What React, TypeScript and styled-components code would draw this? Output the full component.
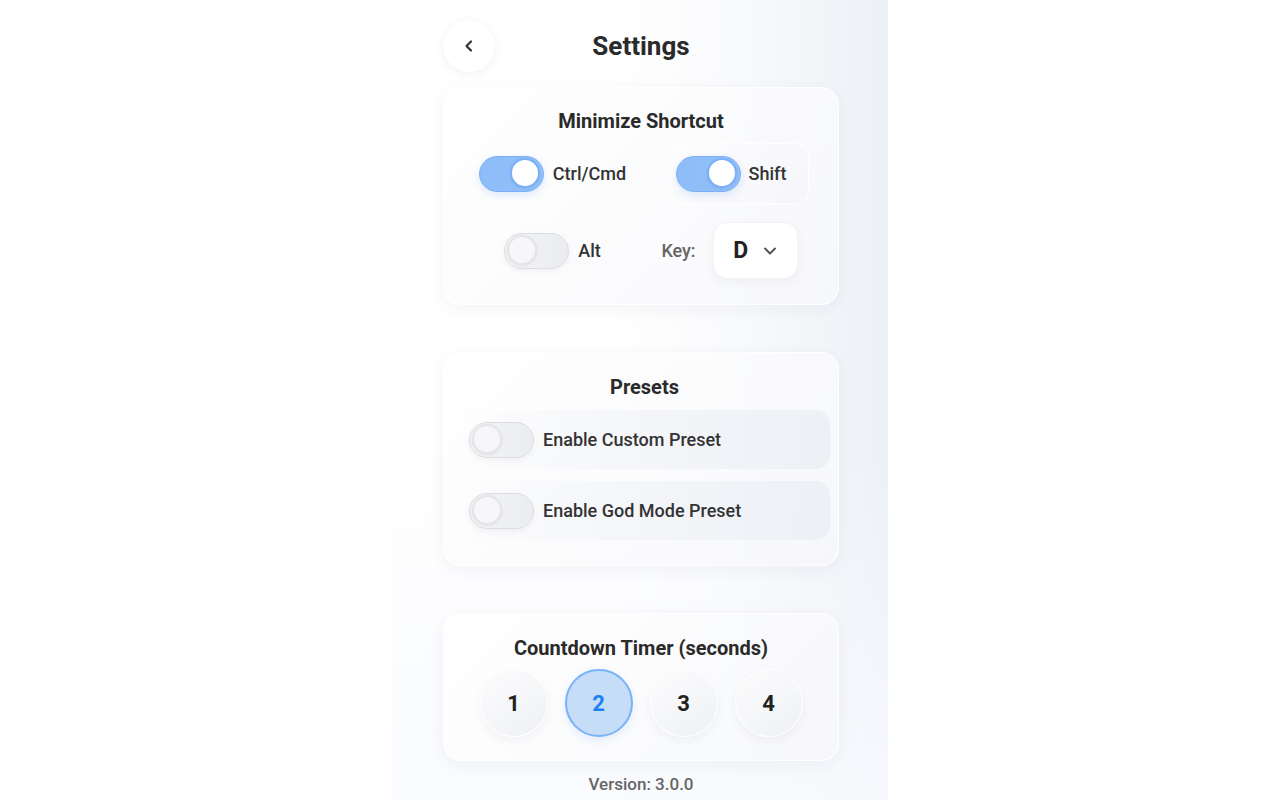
import React, { useState } from "react";
import styled, { createGlobalStyle } from "styled-components";

const GlobalStyle = createGlobalStyle`
  html, body {
    margin: 0;
    padding: 0;
    background: #ffffff;
    font-family: Roboto, "Liberation Sans", sans-serif;
    color: #2a2a2a;
  }
  * {
    box-sizing: border-box;
  }
`;

const Page = styled.div`
  display: flex;
  justify-content: center;
  width: 1280px;
  height: 800px;
  overflow: hidden;
`;

const Panel = styled.main`
  width: 496px;
  height: 800px;
  padding: 20px 49px 0 51px;
  background:
    linear-gradient(180deg, rgba(255, 255, 255, 0) 55%, rgba(248, 250, 254, 0.85) 100%),
    linear-gradient(90deg, #ffffff 0%, #ffffff 45%, #f9fafc 70%, #f2f4f8 88%, #ecf0f7 100%);
  display: flex;
  flex-direction: column;
`;

const Header = styled.header`
  display: grid;
  grid-template-columns: 52px 1fr 52px;
  align-items: center;
  height: 52px;
  margin-bottom: 15px;
`;

const BackButton = styled.button`
  width: 52px;
  height: 52px;
  border-radius: 50%;
  border: none;
  background: #ffffff;
  box-shadow: 0 2px 10px rgba(20, 30, 60, 0.06);
  display: flex;
  align-items: center;
  justify-content: center;
  padding: 0;
  cursor: pointer;
`;

const Title = styled.h1`
  margin: 0;
  text-align: center;
  font-size: 26px;
  font-weight: 700;
  color: #2a2a2a;
`;

const Card = styled.section<{ $pad: string }>`
  padding: ${(p) => p.$pad};
  border-radius: 18px;
  border: 1px solid rgba(255, 255, 255, 0.95);
  background: linear-gradient(135deg, rgba(255, 255, 255, 0.85) 0%, rgba(246, 247, 250, 0.85) 100%);
  box-shadow: 0 4px 18px rgba(30, 40, 80, 0.05);
`;

const CardTitle = styled.h2<{ $gap: number }>`
  margin: 0 0 ${(p) => p.$gap}px;
  text-align: center;
  font-size: 20px;
  line-height: 22px;
  font-weight: 700;
  color: #2a2a2a;
`;

const ShortcutGrid = styled.div`
  display: grid;
  grid-template-columns: 1fr 1fr;
  grid-auto-rows: 61px;
  row-gap: 16px;
`;

const ShortcutItem = styled.div`
  display: flex;
  align-items: center;
  justify-content: center;
  gap: 9px;
`;

const ItemBox = styled.div`
  display: flex;
  align-items: center;
  gap: 8px;
  height: 61px;
  margin-left: 20px;
  padding: 0 22px 0 5px;
  border-radius: 14px;
  border: 1px solid rgba(255, 255, 255, 0.9);
  background: linear-gradient(135deg, rgba(255, 255, 255, 0.4), rgba(244, 245, 249, 0.7));
`;

const Label = styled.span<{ $muted?: boolean }>`
  font-size: 18px;
  font-weight: 500;
  color: ${(p) => (p.$muted ? "#666666" : "#333333")};
`;

const Track = styled.button<{ $on: boolean }>`
  position: relative;
  flex: none;
  width: 65px;
  height: 36px;
  padding: 0;
  border-radius: 18px;
  cursor: pointer;
  border: 1.5px solid ${(p) => (p.$on ? "#79b0f6" : "#dcdde1")};
  background: ${(p) =>
    p.$on
      ? "linear-gradient(90deg, #8dbcf8 0%, #93c0f9 100%)"
      : "linear-gradient(90deg, #f3f4f6 0%, #eaecf0 100%)"};
  box-shadow: ${(p) =>
    p.$on ? "0 3px 8px rgba(80, 140, 230, 0.18)" : "0 2px 6px rgba(0, 0, 0, 0.05)"};
`;

const Knob = styled.span<{ $on: boolean }>`
  position: absolute;
  top: 1.5px;
  left: ${(p) => (p.$on ? "30px" : "1.5px")};
  width: 30px;
  height: 30px;
  border-radius: 50%;
  background: ${(p) => (p.$on ? "#ffffff" : "#f7f7f9")};
  border: 2px solid ${(p) => (p.$on ? "#7ab1f6" : "#e4e5e9")};
  box-shadow: 0 1px 3px rgba(0, 0, 0, 0.07);
`;

const KeySelect = styled.div`
  width: 85px;
  height: 57px;
  border-radius: 14px;
  background: #ffffff;
  border: 1px solid #f3f4f7;
  box-shadow: 0 3px 10px rgba(30, 40, 80, 0.05);
  display: flex;
  align-items: center;
  justify-content: center;
  gap: 15px;
  margin-left: 8px;
`;

const KeyValue = styled.span`
  font-size: 23px;
  font-weight: 700;
  color: #222222;
`;

const PresetList = styled.div`
  display: flex;
  flex-direction: column;
  gap: 12px;
`;

const PresetRow = styled.div`
  display: flex;
  align-items: center;
  gap: 9px;
  height: 59px;
  padding-left: 10px;
  border-radius: 14px;
  background: linear-gradient(90deg, rgba(250, 251, 253, 0) 0%, rgba(243, 245, 249, 0.8) 45%, #edf0f5 100%);
`;

const NumberRow = styled.div`
  display: flex;
  justify-content: center;
  gap: 17px;
`;

const NumberButton = styled.button<{ $active: boolean }>`
  width: 68px;
  height: 68px;
  border-radius: 50%;
  padding: 0;
  cursor: pointer;
  font-family: inherit;
  font-size: 22px;
  font-weight: 700;
  color: ${(p) => (p.$active ? "#1b80f2" : "#222222")};
  border: ${(p) => (p.$active ? "2px solid #78b2f7" : "1px solid rgba(255, 255, 255, 0.95)")};
  background: ${(p) =>
    p.$active
      ? "#c6ddf8"
      : "linear-gradient(145deg, #fcfcfd 0%, #f5f6f8 55%, #eef0f4 100%)"};
  box-shadow: ${(p) =>
    p.$active ? "0 3px 10px rgba(80, 140, 230, 0.15)" : "0 4px 10px rgba(30, 40, 80, 0.05)"};
`;

const Version = styled.div`
  margin-top: 13px;
  text-align: center;
  font-size: 17px;
  font-weight: 500;
  color: #666666;
`;

const Toggle = (props: { on: boolean; onClick: () => void }) => (
  <Track $on={props.on} onClick={props.onClick}>
    <Knob $on={props.on} />
  </Track>
);

const App = () => {
  const [mods, setMods] = useState({ ctrl: true, shift: true, alt: false });
  const [custom, setCustom] = useState(false);
  const [god, setGod] = useState(false);
  const [timer, setTimer] = useState(2);

  return (
    <Page>
      <GlobalStyle />
      <Panel>
        <Header>
          <BackButton>
            <svg width="16" height="16" viewBox="0 0 16 16" fill="none">
              <path
                d="M10 3.5L5.5 8l4.5 4.5"
                stroke="#333"
                strokeWidth="2.2"
                strokeLinecap="round"
                strokeLinejoin="round"
              />
            </svg>
          </BackButton>
          <Title>Settings</Title>
          <span />
        </Header>

        <Card $pad="22px 20px 23px">
          <CardTitle $gap={11}>Minimize Shortcut</CardTitle>
          <ShortcutGrid>
            <ShortcutItem>
              <Toggle on={mods.ctrl} onClick={() => setMods({ ...mods, ctrl: !mods.ctrl })} />
              <Label>Ctrl/Cmd</Label>
            </ShortcutItem>
            <ShortcutItem>
              <ItemBox>
                <Toggle on={mods.shift} onClick={() => setMods({ ...mods, shift: !mods.shift })} />
                <Label>Shift</Label>
              </ItemBox>
            </ShortcutItem>
            <ShortcutItem>
              <Toggle on={mods.alt} onClick={() => setMods({ ...mods, alt: !mods.alt })} />
              <Label>Alt</Label>
            </ShortcutItem>
            <ShortcutItem>
              <Label $muted>Key:</Label>
              <KeySelect>
                <KeyValue>D</KeyValue>
                <svg width="14" height="10" viewBox="0 0 14 10" fill="none">
                  <path
                    d="M2 2.5l5 5 5-5"
                    stroke="#555"
                    strokeWidth="2"
                    strokeLinecap="round"
                    strokeLinejoin="round"
                  />
                </svg>
              </KeySelect>
            </ShortcutItem>
          </ShortcutGrid>
        </Card>

        <Card $pad="23px 8px 25px 15px" style={{ marginTop: 47 }}>
          <CardTitle $gap={12}>Presets</CardTitle>
          <PresetList>
            <PresetRow>
              <Toggle on={custom} onClick={() => setCustom(!custom)} />
              <Label>Enable Custom Preset</Label>
            </PresetRow>
            <PresetRow>
              <Toggle on={god} onClick={() => setGod(!god)} />
              <Label>Enable God Mode Preset</Label>
            </PresetRow>
          </PresetList>
        </Card>

        <Card $pad="23px 20px 23px" style={{ marginTop: 47 }}>
          <CardTitle $gap={10}>Countdown Timer (seconds)</CardTitle>
          <NumberRow>
            {[1, 2, 3, 4].map((n) => (
              <NumberButton key={n} $active={timer === n} onClick={() => setTimer(n)}>
                {n}
              </NumberButton>
            ))}
          </NumberRow>
        </Card>

        <Version>Version: 3.0.0</Version>
      </Panel>
    </Page>
  );
};

export default App;
